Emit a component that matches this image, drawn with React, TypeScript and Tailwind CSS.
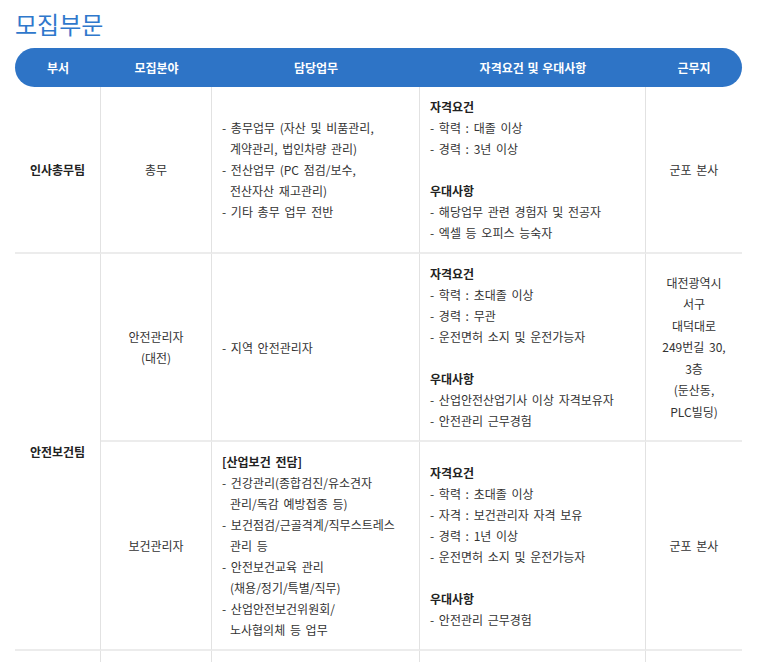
const cols = ['부서', '모집분야', '담당업무', '자격요건 및 우대사항', '근무지'];

type Block = { title?: string; items: string[][] };

function Dash({ lines }: { lines: string[] }) {
  // first line starts with "- ", the rest hang under the text
  return (
    <div>
      {lines.map((l, i) => (
        <div key={i} className={i === 0 ? '' : 'pl-[8px]'}>
          {l}
        </div>
      ))}
    </div>
  );
}

function Qualify({ blocks }: { blocks: Block[] }) {
  return (
    <div className="flex flex-col">
      {blocks.map((b, i) => (
        <div key={i} className={i > 0 ? 'mt-[21px]' : ''}>
          {b.title && <div className="font-bold text-[#222]">{b.title}</div>}
          {b.items.map((it, j) => (
            <Dash key={j} lines={it} />
          ))}
        </div>
      ))}
    </div>
  );
}

const cell = 'border-b-2 border-[#ececec] py-[9px] px-[10px] flex items-center';
const rb = 'border-r border-r-[#e2e2e2]';

export default function App() {
  return (
    <div
      className="min-h-screen bg-white text-[#333] text-[12px] leading-[21px] [word-spacing:2px]"
      style={{ fontFamily: '"Noto Sans CJK KR", "Noto Sans", sans-serif' }}
    >
      <div className="px-[15px] pt-[6px]">
        <h2 className="text-[24px] leading-[36px] text-[#2f78cc] font-normal [word-spacing:0px]">모집부문</h2>

        <div className="mt-[6px] h-[39px] rounded-full bg-[#2e74c6] grid grid-cols-[86px_111px_208px_226px_96px] items-center text-white font-bold text-[12px] w-[727px] [word-spacing:1px]">
          {cols.map((c) => (
            <div key={c} className="text-center">
              {c}
            </div>
          ))}
        </div>

        <div className="grid grid-cols-[86px_111px_208px_226px_96px] w-[727px]">
          {/* 인사총무팀 */}
          <div className={`${cell} ${rb} justify-center font-bold text-[#222]`}>인사총무팀</div>
          <div className={`${cell} ${rb} justify-center`}>총무</div>
          <div className={`${cell} ${rb}`}>
            <div>
              <Dash lines={['- 총무업무 (자산 및 비품관리,', '계약관리, 법인차량 관리)']} />
              <Dash lines={['- 전산업무 (PC 점검/보수,', '전산자산 재고관리)']} />
              <Dash lines={['- 기타 총무 업무 전반']} />
            </div>
          </div>
          <div className={`${cell} ${rb}`}>
            <Qualify
              blocks={[
                { title: '자격요건', items: [['- 학력 : 대졸 이상'], ['- 경력 : 3년 이상']] },
                { title: '우대사항', items: [['- 해당업무 관련 경험자 및 전공자'], ['- 엑셀 등 오피스 능숙자']] },
              ]}
            />
          </div>
          <div className={`${cell} justify-center`}>군포 본사</div>

          {/* 안전보건팀 */}
          <div className={`${cell} ${rb} row-span-2 justify-center font-bold text-[#222]`}>안전보건팀</div>
          <div className={`${cell} ${rb} justify-center text-center`}>
            <div>
              안전관리자
              <br />
              (대전)
            </div>
          </div>
          <div className={`${cell} ${rb}`}>
            <Dash lines={['- 지역 안전관리자']} />
          </div>
          <div className={`${cell} ${rb}`}>
            <Qualify
              blocks={[
                {
                  title: '자격요건',
                  items: [['- 학력 : 초대졸 이상'], ['- 경력 : 무관'], ['- 운전면허 소지 및 운전가능자']],
                },
                { title: '우대사항', items: [['- 산업안전산업기사 이상 자격보유자'], ['- 안전관리 근무경험']] },
              ]}
            />
          </div>
          <div className={`${cell} justify-center text-center leading-[21.5px]`}>
            <div>
              대전광역시
              <br />
              서구
              <br />
              대덕대로
              <br />
              249번길 30,
              <br />
              3층
              <br />
              (둔산동,
              <br />
              PLC빌딩)
            </div>
          </div>

          <div className={`${cell} ${rb} justify-center`}>보건관리자</div>
          <div className={`${cell} ${rb}`}>
            <div>
              <div className="font-bold text-[#222]">[산업보건 전담]</div>
              <Dash lines={['- 건강관리(종합검진/유소견자', '관리/독감 예방접종 등)']} />
              <Dash lines={['- 보건점검/근골격계/직무스트레스', '관리 등']} />
              <Dash lines={['- 안전보건교육 관리', '(채용/정기/특별/직무)']} />
              <Dash lines={['- 산업안전보건위원회/', '노사협의체 등 업무']} />
            </div>
          </div>
          <div className={`${cell} ${rb}`}>
            <Qualify
              blocks={[
                {
                  title: '자격요건',
                  items: [
                    ['- 학력 : 초대졸 이상'],
                    ['- 자격 : 보건관리자 자격 보유'],
                    ['- 경력 : 1년 이상'],
                    ['- 운전면허 소지 및 운전가능자'],
                  ],
                },
                { title: '우대사항', items: [['- 안전관리 근무경험']] },
              ]}
            />
          </div>
          <div className={`${cell} justify-center`}>군포 본사</div>

          {/* next row, cut off by the window */}
          <div className={`${cell} ${rb} h-[60px]`} />
          <div className={`${cell} ${rb} h-[60px]`} />
          <div className={`${cell} ${rb} h-[60px]`} />
          <div className={`${cell} ${rb} h-[60px]`} />
          <div className={`${cell} h-[60px]`} />
        </div>
      </div>
    </div>
  );
}
